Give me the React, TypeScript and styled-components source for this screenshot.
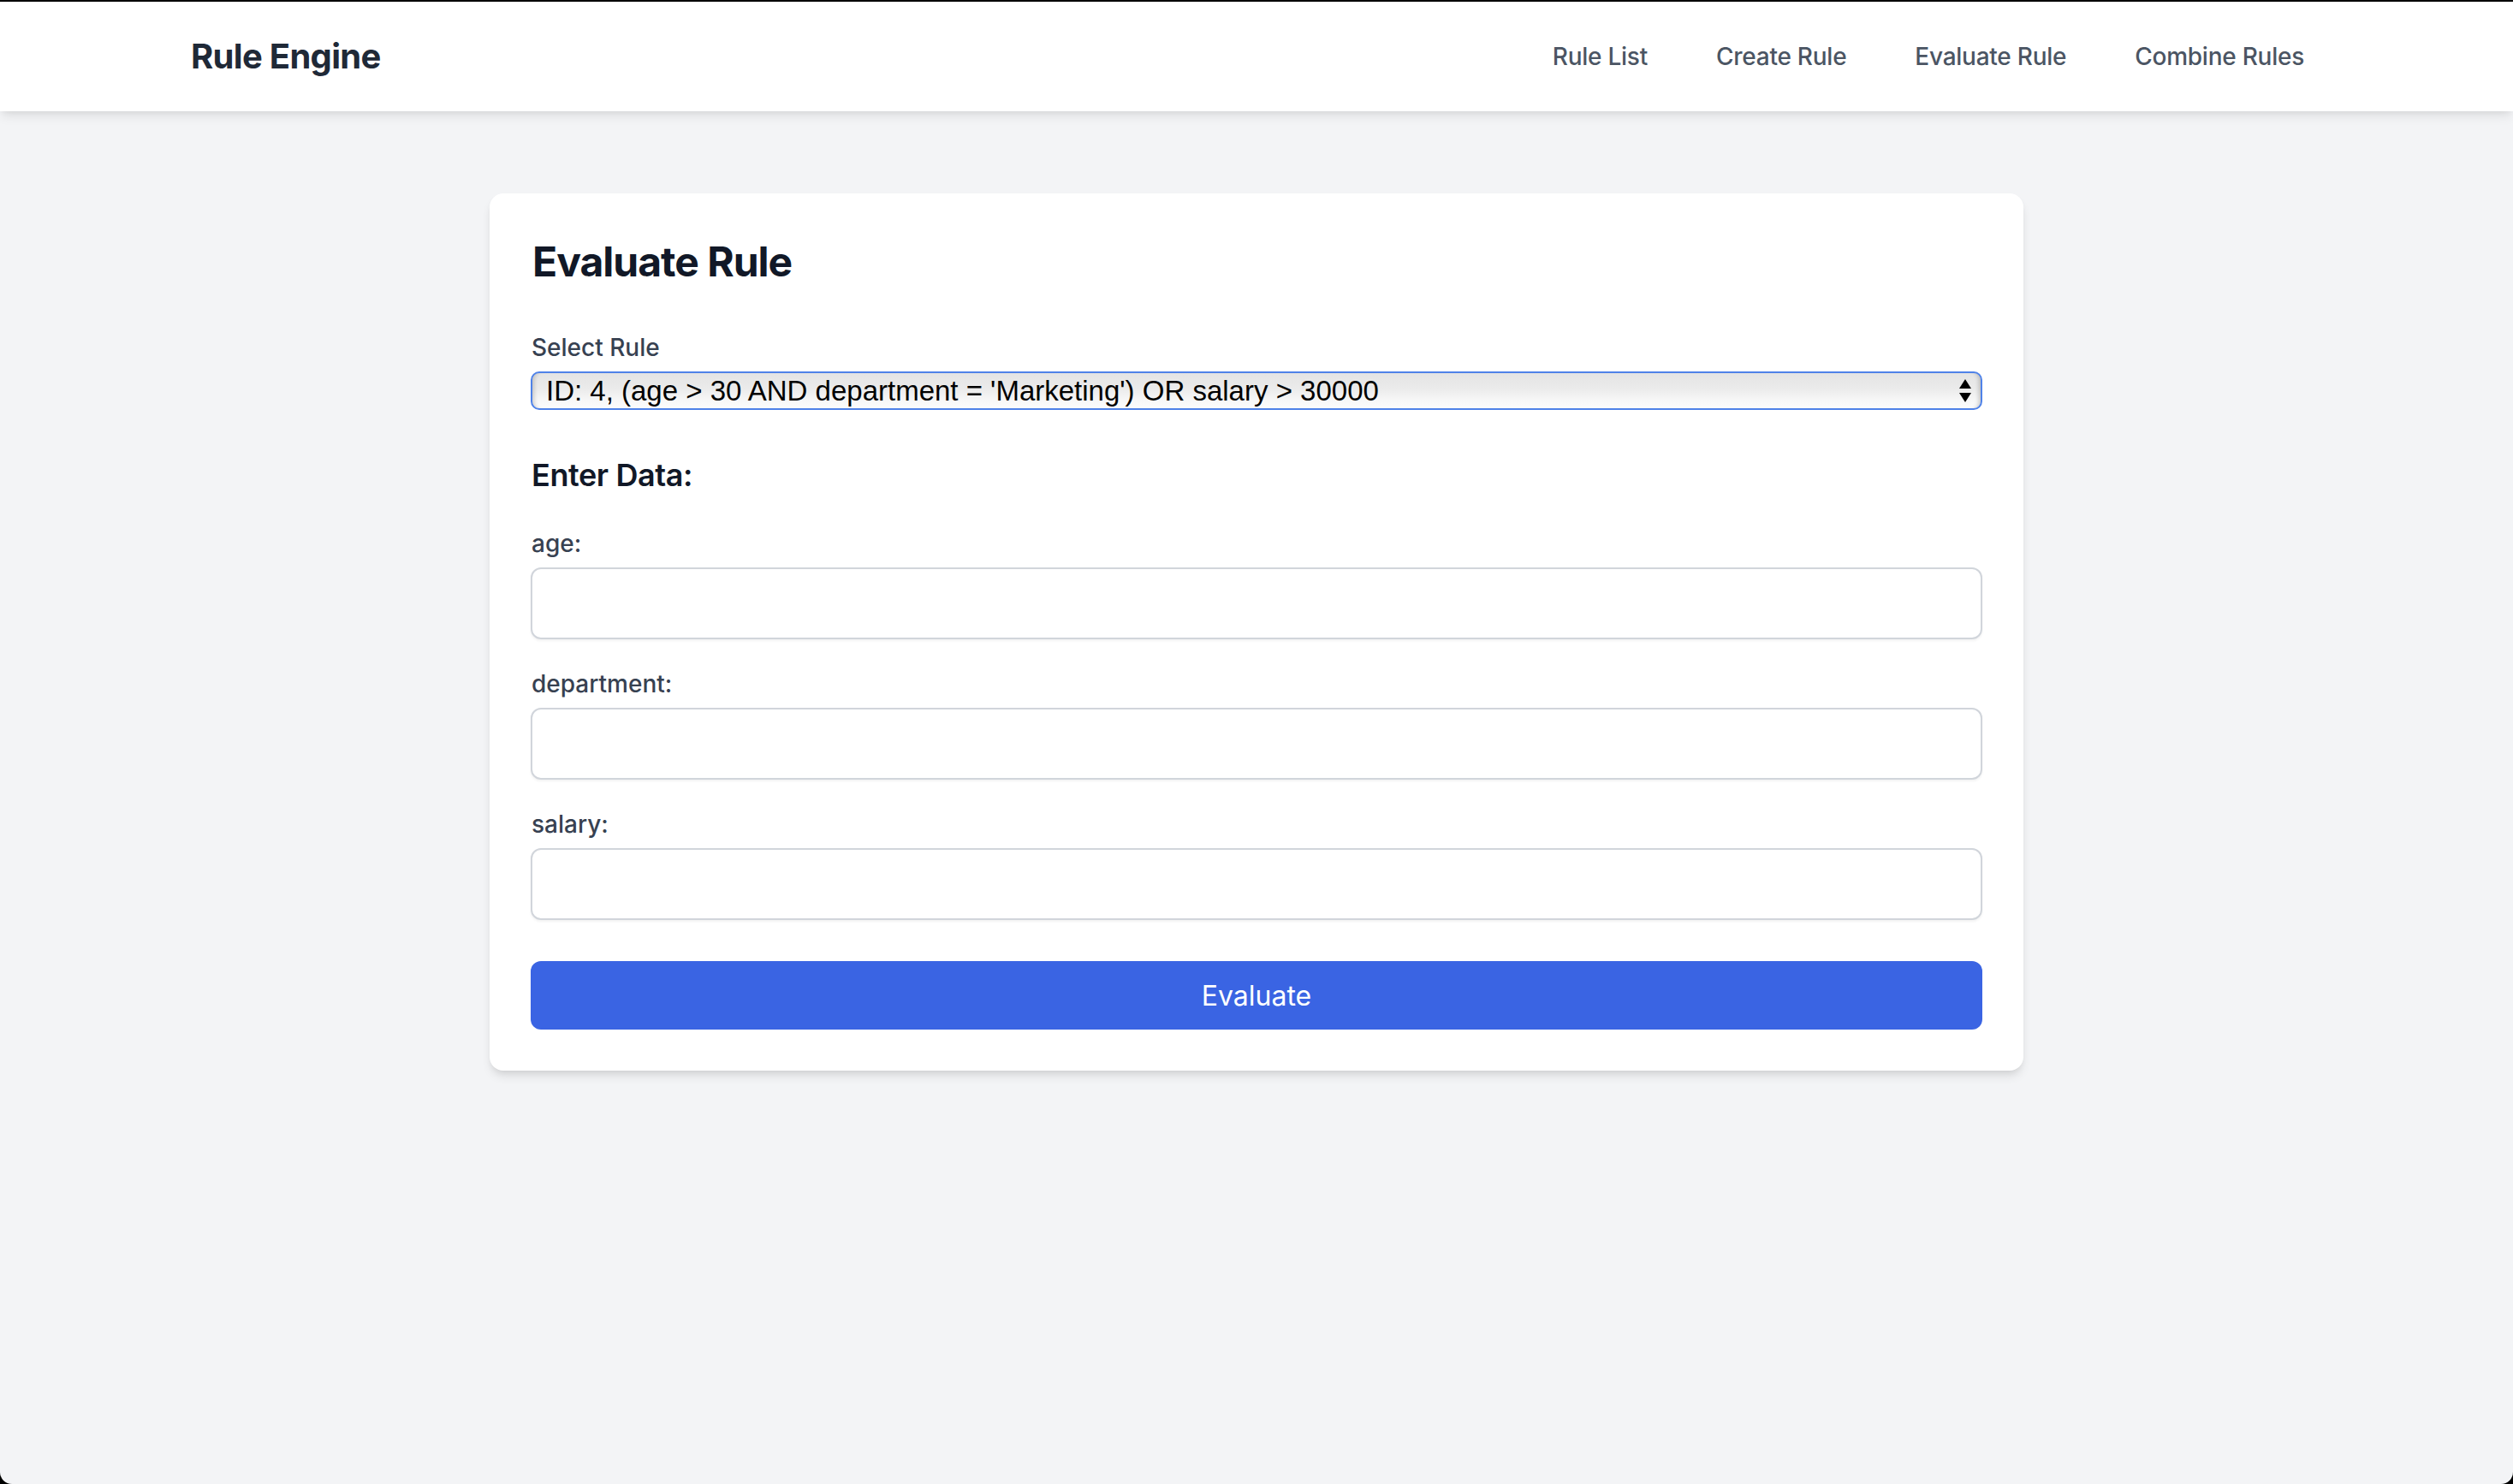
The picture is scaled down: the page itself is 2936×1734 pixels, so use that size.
import React from "react";
import styled, { createGlobalStyle } from "styled-components";

const GlobalStyle = createGlobalStyle`
  html, body {
    margin: 0;
    padding: 0;
  }
  body {
    background: #000;
    font-family: Inter, "Noto Sans", "Liberation Sans", sans-serif;
    -webkit-font-smoothing: antialiased;
  }
  * { box-sizing: border-box; }
`;

const Page = styled.div`
  margin-top: 2px;
  min-height: calc(100vh - 2px);
  background: #f3f4f6;
  border-radius: 0 0 14px 14px;
  overflow: hidden;
`;

const Header = styled.nav`
  background: #ffffff;
  box-shadow: 0 8px 12px -2px rgba(0, 0, 0, 0.08), 0 4px 8px -4px rgba(0, 0, 0, 0.08);
  position: relative;
  z-index: 1;
`;

const HeaderInner = styled.div`
  max-width: 2560px;
  margin: 0 auto;
  padding: 0 32px;
  height: 128px;
  display: flex;
  align-items: center;
  justify-content: space-between;
`;

const Brand = styled.div`
  font-size: 40px;
  line-height: 56px;
  font-weight: 700;
  color: #1f2937;
  letter-spacing: -0.7px;
  padding-left: 3px;
`;

const NavList = styled.div`
  display: flex;
  align-items: center;
  gap: 32px;
`;

const NavLink = styled.a`
  padding: 16px 24px;
  font-size: 28px;
  line-height: 40px;
  font-weight: 500;
  color: #4b5563;
  text-decoration: none;
  letter-spacing: -0.25px;
`;

const Main = styled.main`
  display: flex;
  justify-content: center;
  padding: 96px 32px;
`;

const Card = styled.section`
  width: 1792px;
  background: #ffffff;
  border-radius: 16px;
  padding: 48px;
  box-shadow: 0 8px 12px -2px rgba(0, 0, 0, 0.1), 0 4px 8px -4px rgba(0, 0, 0, 0.1);
`;

const Title = styled.h2`
  margin: 0 0 48px;
  font-size: 48px;
  line-height: 64px;
  font-weight: 700;
  color: #111827;
  letter-spacing: -1px;
  padding-left: 2px;
`;

const Label = styled.label`
  display: block;
  font-size: 28px;
  line-height: 40px;
  font-weight: 500;
  color: #374151;
  margin-bottom: 8px;
  padding-left: 1px;
`;

const SelectWrap = styled.div`
  position: relative;
`;

const Select = styled.select`
  display: block;
  width: 100%;
  height: 45px;
  appearance: none;
  -webkit-appearance: none;
  border: 2.5px solid #4f82e8;
  border-radius: 10px;
  background: linear-gradient(#e4e4e4 0%, #ebebeb 45%, #f8f8f8 80%, #fcfcfc 100%);
  box-shadow: inset 6px 0 5px -4px rgba(0, 0, 0, 0.18), inset -6px 0 5px -4px rgba(0, 0, 0, 0.2);
  font-family: "Liberation Sans", Arial, sans-serif;
  font-size: 33px;
  color: #000;
  padding: 0 48px 0 16px;
  outline: none;
`;

const SelectArrows = styled.svg`
  position: absolute;
  right: 13px;
  top: 50%;
  transform: translateY(-50%);
  pointer-events: none;
`;

const Subheading = styled.h3`
  margin: 48px 0 32px;
  font-size: 36px;
  line-height: 56px;
  font-weight: 600;
  color: #111827;
  letter-spacing: -0.4px;
  padding-left: 1px;
`;

const Field = styled.div`
  margin-bottom: 32px;
`;

const Input = styled.input`
  display: block;
  width: 100%;
  height: 84px;
  border: 2px solid #d1d5db;
  border-radius: 12px;
  padding: 0 24px;
  font-family: inherit;
  font-size: 32px;
  background: #fff;
  box-shadow: 0 2px 3px rgba(0, 0, 0, 0.05);
  outline: none;
`;

const Button = styled.button`
  display: block;
  width: 100%;
  height: 80px;
  margin-top: 48px;
  border: none;
  border-radius: 12px;
  background: #3a64e3;
  color: #ffffff;
  font-family: inherit;
  font-size: 32px;
  font-weight: 400;
  cursor: pointer;
`;

const fields = ["age", "department", "salary"];

export default function App() {
  return (
    <>
      <GlobalStyle />
      <Page>
        <Header>
          <HeaderInner>
            <Brand>Rule Engine</Brand>
            <NavList>
              <NavLink href="#">Rule List</NavLink>
              <NavLink href="#">Create Rule</NavLink>
              <NavLink href="#">Evaluate Rule</NavLink>
              <NavLink href="#">Combine Rules</NavLink>
            </NavList>
          </HeaderInner>
        </Header>
        <Main>
          <Card>
            <Title>Evaluate Rule</Title>
            <Label>Select Rule</Label>
            <SelectWrap>
              <Select defaultValue="4">
                <option value="4">
                  ID: 4, (age &gt; 30 AND department = 'Marketing') OR salary &gt; 30000
                </option>
              </Select>
              <SelectArrows width="14" height="28" viewBox="0 0 14 28">
                <polygon points="0,11 7,0 14,11" fill="#000" />
                <polygon points="0,16 14,16 7,27" fill="#000" />
              </SelectArrows>
            </SelectWrap>
            <Subheading>Enter Data:</Subheading>
            {fields.map((f) => (
              <Field key={f}>
                <Label>{f}:</Label>
                <Input type="text" />
              </Field>
            ))}
            <Button>Evaluate</Button>
          </Card>
        </Main>
      </Page>
    </>
  );
}
